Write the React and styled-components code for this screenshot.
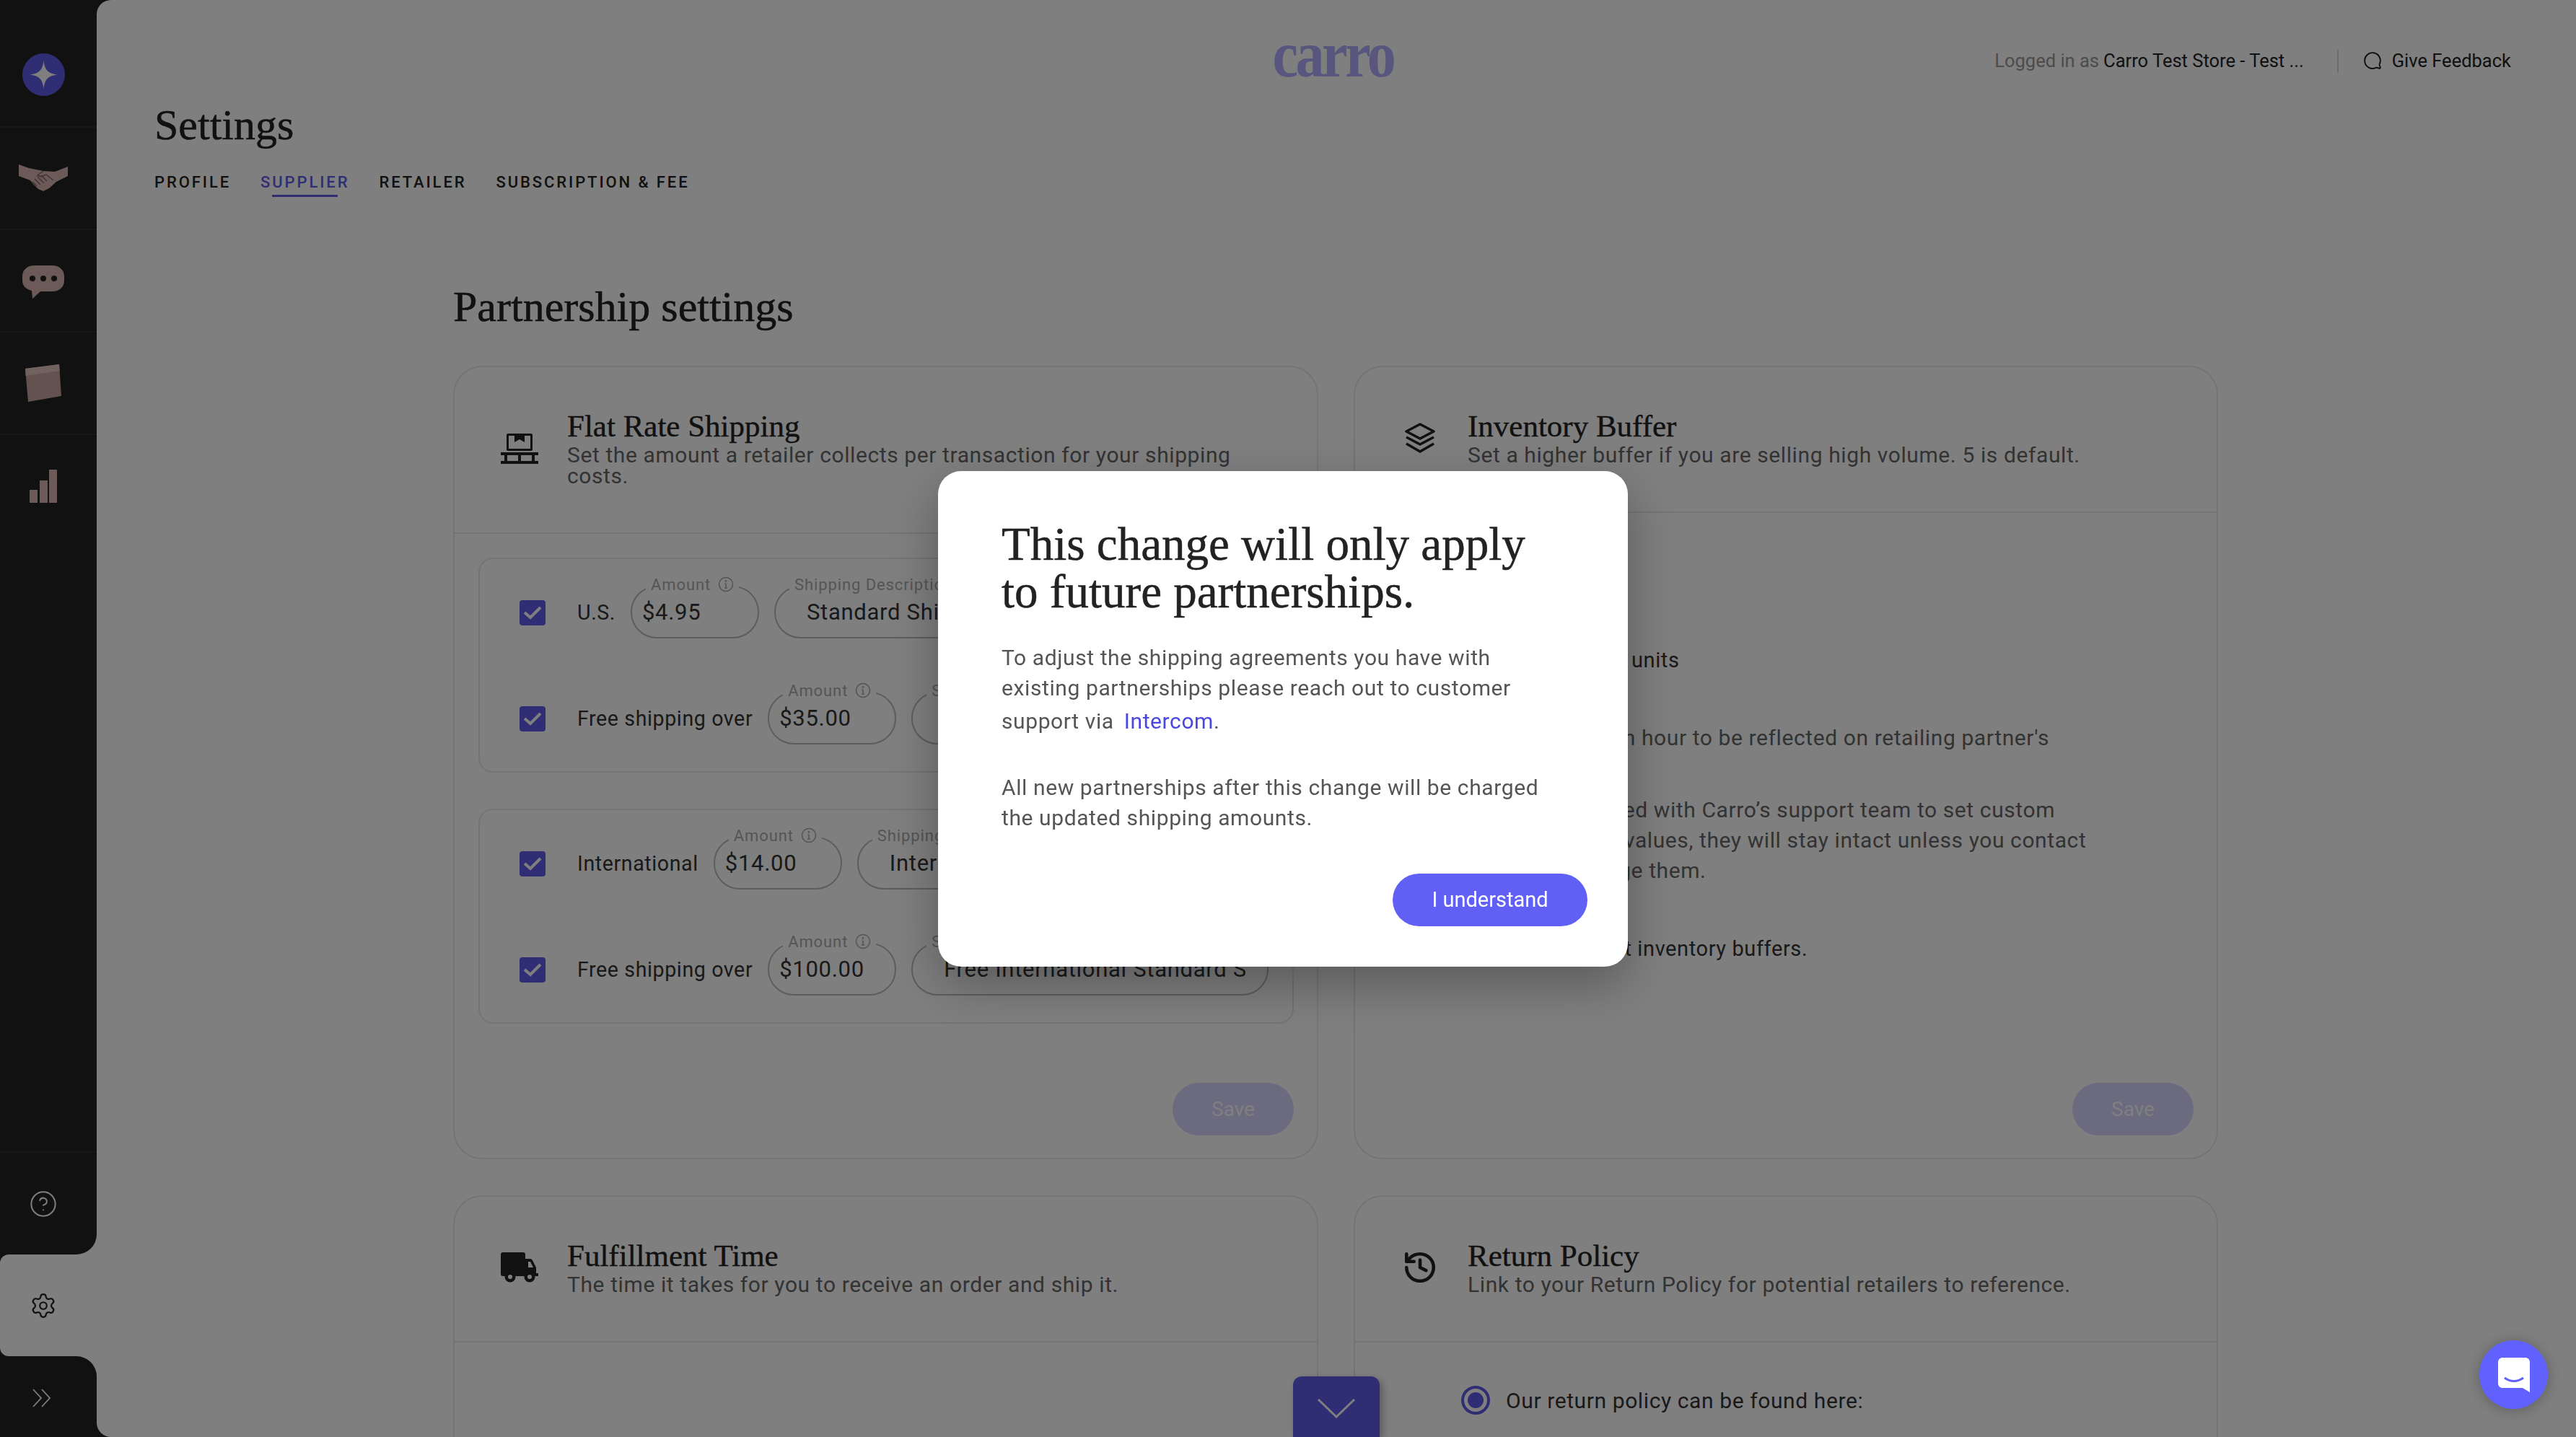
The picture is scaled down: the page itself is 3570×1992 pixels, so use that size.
import React from 'react'
import styled, { createGlobalStyle } from 'styled-components'
import { CircleHelp, Settings as SettingsIcon, MessageCircle, History } from 'lucide-react'

const sans = `Roboto, 'Liberation Sans', sans-serif`
const serif = `'Liberation Serif', serif`
const purple = '#5f5ce8'

const Global = createGlobalStyle`
  html, body { margin: 0; padding: 0; height: 100%; background: #222; }
  * { box-sizing: border-box; }
  body { font-family: ${sans}; overflow: hidden; }
`

const App_ = styled.div`
  display: flex;
  height: 1992px;
  overflow: hidden;
  background: #222;
`

const Side = styled.nav`
  width: 134px;
  flex: none;
  display: flex;
  flex-direction: column;
  background: #fff;
`

const Rail = styled.div`
  flex: 1;
  display: flex;
  flex-direction: column;
  background: #222;
  border-bottom-right-radius: 28px;
`

const RailItem = styled.div`
  height: ${p => p.$h || 142}px;
  display: flex;
  align-items: center;
  justify-content: center;
  padding: ${p => p.$top || 0}px 14px 0 0;
  ${p => (p.$border === 'top' ? 'border-top: 2px solid #2e2e2e;' : '')}
  ${p => (p.$border === 'none' || p.$border === 'top' ? '' : 'border-bottom: 2px solid #2e2e2e;')}
`

const Spacer = styled.div`
  flex: 1;
`

const GearCell = styled.div`
  height: 141px;
  background: #222;
`

const GearTab = styled.div`
  height: 100%;
  background: #fff;
  border-radius: 12px 0 0 12px;
  display: flex;
  align-items: center;
  justify-content: center;
  padding-right: 14px;
  color: #222;
`

const Collapse = styled.div`
  height: 112px;
  background: #222;
  border-top-right-radius: 28px;
  display: flex;
  align-items: center;
  justify-content: center;
  padding: 4px 18px 0 0;
`

const Main = styled.main`
  flex: 1;
  min-width: 0;
  background: #fff;
  border-radius: 20px 0 0 20px;
  padding: 0 90px 0 80px;
  overflow: hidden;
`

const TopBar = styled.header`
  height: 143px;
  display: grid;
  grid-template-columns: 1fr auto 1fr;
  align-items: start;
`

const Logo = styled.div`
  grid-column: 2;
  font-family: ${serif};
  font-weight: 700;
  font-size: 92px;
  line-height: 150px;
  height: 143px;
  letter-spacing: -4px;
  color: #b0adff;
  transform: scaleX(0.87);
`

const UserBar = styled.div`
  grid-column: 3;
  display: flex;
  align-items: center;
  justify-content: flex-end;
  height: 168px;
  font-size: 25.5px;
  color: #222;
`

const Muted = styled.span`
  color: #999;
  margin-right: 6px;
`

const Sep = styled.span`
  width: 2px;
  height: 33px;
  background: #ddd;
  margin: 0 34px 0 46px;
`

const PageTitle = styled.h1`
  margin: 0;
  font-family: ${serif};
  font-weight: 400;
  font-size: 60px;
  line-height: 60px;
  -webkit-text-stroke: 0.5px #222;
  color: #222;
`

const Tabs = styled.div`
  display: flex;
  gap: 41px;
  margin: 35px 0 121px;
  height: 36px;
`

const Tab = styled.div`
  font-size: 22px;
  font-weight: 500;
  line-height: 30px;
  letter-spacing: 2.9px;
  color: ${p => (p.$active ? purple : '#222')};
  &::after {
    content: '';
    display: ${p => (p.$active ? 'block' : 'none')};
    height: 3px;
    margin: 2px 16px 0;
    background: ${purple};
  }
`

const Section = styled.section`
  margin-left: 414px;
  width: 2446px;
`

const SectionTitle = styled.h2`
  margin: 0 0 52px;
  font-family: ${serif};
  font-weight: 400;
  font-size: 60px;
  line-height: 60px;
  -webkit-text-stroke: 0.5px #222;
  color: #222;
`

const Grid = styled.div`
  display: grid;
  grid-template-columns: 1199px 1198px;
  gap: 50px 49px;
`

const Card = styled.article`
  height: 1100px;
  display: flex;
  flex-direction: column;
  border: 2px solid #e8e8e8;
  border-radius: 40px;
`

const CardHeader = styled.div`
  display: flex;
  align-items: center;
  gap: 37px;
  padding: 60px 40px 64px 61px;
  border-bottom: 2px solid #e8e8e8;
`

const IconCell = styled.div`
  width: 58px;
  flex: none;
  display: flex;
  justify-content: center;
  color: #222;
`

const CardTitle = styled.h3`
  margin: 0 0 3px;
  font-family: ${serif};
  font-weight: 400;
  font-size: 43px;
  line-height: 44px;
  -webkit-text-stroke: 0.4px #222;
  color: #222;
`

const CardDesc = styled.p`
  margin: 0;
  font-size: 30px;
  line-height: 29px;
  letter-spacing: 0.6px;
  color: #666;
`

const CardBody = styled.div`
  flex: 1;
  display: flex;
  flex-direction: column;
  padding: 33px 32px 31px 33px;
`

const Group = styled.div`
  display: flex;
  flex-direction: column;
  gap: 75px;
  padding: 38px 33px 37px 55px;
  margin-bottom: 50px;
  border: 2px solid #e8e8e8;
  border-radius: 20px;
`

const Row = styled.div`
  height: 72px;
  display: flex;
  align-items: center;
  gap: 21px;
`

const Check = styled.span`
  width: 36px;
  height: 35px;
  flex: none;
  margin-right: 23px;
  border-radius: 4px;
  background: ${purple};
  display: flex;
  align-items: center;
  justify-content: center;
`

const RowLabel = styled.span`
  font-size: 28.6px;
  letter-spacing: 0.6px;
  color: #333;
  white-space: nowrap;
`

const ReturnLabel = styled(RowLabel)`
  font-size: 30px;
`

const Field = styled.fieldset`
  height: 84px;
  margin: -12px 0 0;
  padding: 0;
  min-width: 0;
  border: 2px solid #bbb;
  border-radius: 36px;
  flex: ${p => (p.$grow ? '1' : 'none')};
  width: ${p => (p.$grow ? 'auto' : '178px')};
`

const Legend = styled.legend`
  margin-left: ${p => p.$left}px;
  padding: 0 7px;
  height: 24px;
  display: flex;
  align-items: center;
  gap: 10px;
  font-size: 22px;
  letter-spacing: 0.9px;
  color: #aaa;
  white-space: nowrap;
  transform: translateY(-3px);
`

const Value = styled.div`
  margin: 0 ${p => p.$right}px 0 ${p => p.$inset}px;
  font-size: 31px;
  line-height: 48px;
  letter-spacing: 0.7px;
  color: #333;
  overflow: hidden;
  white-space: nowrap;
`

const SaveButton = styled.button`
  align-self: flex-end;
  margin-top: auto;
  width: 168px;
  height: 73px;
  border: 0;
  border-radius: 37px;
  background: #d6d4ff;
  color: #fff;
  font-family: ${sans};
  font-size: 28px;
`

const BufferBody = styled.div`
  flex: 1;
  display: flex;
  flex-direction: column;
  padding: 183px 32px 31px 146px;
`

const BufferRow = styled.div`
  display: flex;
  align-items: center;
  gap: 22px;
  height: 42px;
  margin-bottom: 66px;
  font-size: 29px;
  letter-spacing: 0.6px;
  color: #333;
`

const BufferInput = styled.div`
  width: 215px;
  height: 72px;
  border: 2px solid #bbb;
  border-radius: 36px;
`

const Note = styled.p`
  margin: 0 0 ${p => p.$after || 16}px;
  font-size: ${p => (p.$dark ? 29 : 30)}px;
  line-height: 42px;
  letter-spacing: 0.6px;
  white-space: nowrap;
  color: ${p => (p.$dark ? '#333' : '#666')};
`

const ReturnBody = styled.div`
  display: flex;
  align-items: center;
  gap: 22px;
  padding: 60px 0 0 147px;
`

const Radio = styled.span`
  width: 40px;
  height: 40px;
  border-radius: 50%;
  border: 4px solid ${purple};
  display: flex;
  align-items: center;
  justify-content: center;
  &::after {
    content: '';
    width: 22px;
    height: 22px;
    border-radius: 50%;
    background: ${purple};
  }
`

const ScrollDown = styled.button`
  position: fixed;
  left: 1792px;
  bottom: 0;
  width: 120px;
  height: 84px;
  border: 0;
  border-radius: 12px 12px 0 0;
  background: ${purple};
  box-shadow: 4px 4px 12px rgba(0, 0, 0, 0.3);
  display: flex;
  justify-content: center;
  padding: 30px 0 0;
`

const Overlay = styled.div`
  position: fixed;
  inset: 0;
  padding-right: 14px;
  background: rgba(0, 0, 0, 0.5);
  display: flex;
  align-items: center;
  justify-content: center;
`

const Modal = styled.div`
  width: 956px;
  height: 687px;
  padding: 68px 56px 56px 88px;
  background: #fff;
  border-radius: 32px;
  box-shadow: 0 24px 70px rgba(0, 0, 0, 0.3);
  display: flex;
  flex-direction: column;
`

const ModalTitle = styled.h2`
  margin: 0 0 38px;
  font-family: ${serif};
  font-weight: 400;
  font-size: 65px;
  line-height: 66px;
  -webkit-text-stroke: 0.5px #222;
  color: #222;
`

const ModalText = styled.p`
  margin: 0 0 ${p => p.$after || 0}px;
  font-size: 30px;
  line-height: 42px;
  letter-spacing: 0.6px;
  color: #555;
`

const Intercom = styled.span`
  color: #4a46e0;
  margin-left: 6px;
  line-height: 50px;
`

const Understand = styled.button`
  align-self: flex-end;
  margin-top: auto;
  width: 270px;
  height: 73px;
  border: 0;
  border-radius: 37px;
  background: #6160f5;
  color: #fff;
  font-family: ${sans};
  font-size: 29px;
`

const Launcher = styled.div`
  position: fixed;
  left: 3436px;
  top: 1858px;
  width: 95px;
  height: 95px;
  border-radius: 50%;
  background: #6161ff;
  box-shadow: 0 2px 20px rgba(0, 0, 0, 0.25);
  display: flex;
  align-items: center;
  justify-content: center;
`

const FeedbackIcon = styled(MessageCircle)`
  margin-right: 14px;
  transform: scaleX(-1);
`

const Tick = () => (
  <svg width="28" height="22" viewBox="0 0 28 22" fill="none" stroke="#fff" strokeWidth="4">
    <path d="M3 11l8 7L25 4" />
  </svg>
)

const Info = () => (
  <svg width="22" height="22" viewBox="0 0 22 22" fill="none" stroke="#aaa" strokeWidth="1.6">
    <circle cx="11" cy="11" r="9.5" />
    <path d="M11 10v6M9 16h4M9.5 10H11" />
    <circle cx="11" cy="6.5" r="0.6" />
  </svg>
)

const PalletIcon = () => (
  <svg width="52" height="42" viewBox="0 0 52 42" fill="currentColor">
    <path fillRule="evenodd" d="M10 0h32a2 2 0 012 2v20a2 2 0 01-2 2H10a2 2 0 01-2-2V2a2 2 0 012-2zm1 3v18h30V3h-8v9l-7-4-7 4V3z" />
    <rect x="0" y="26" width="52" height="4" />
    <rect x="0" y="38" width="52" height="4" />
    <rect x="5" y="30" width="4" height="8" />
    <rect x="24" y="30" width="4" height="8" />
    <rect x="43" y="30" width="4" height="8" />
  </svg>
)

const LayersIcon = () => (
  <svg width="44" height="43" viewBox="0 0 44 43" fill="none" stroke="currentColor" strokeWidth="3.6" strokeLinejoin="round">
    <path d="M22 2L41 12 22 22 3 12z" />
    <path d="M3 20l19 10 19-10" />
    <path d="M3 29l19 11 19-11" />
  </svg>
)

const TruckIcon = () => (
  <svg width="52" height="42" viewBox="0 0 52 42" fill="currentColor">
    <path d="M3 0h28a3 3 0 013 3v30H3a3 3 0 01-3-3V3a3 3 0 013-3z" />
    <path fillRule="evenodd" d="M34 9h7a3 3 0 012.6 1.5L49 21v8h3v4H34zm4 4v8h7l-4-8z" />
    <circle cx="13" cy="34" r="7.5" fill="#222" />
    <circle cx="13" cy="34" r="3" fill="#fff" />
    <circle cx="40" cy="34" r="7.5" fill="#222" />
    <circle cx="40" cy="34" r="3" fill="#fff" />
  </svg>
)

const RateRow = ({ label, amount, desc }) => (
  <Row>
    <Check><Tick /></Check>
    <RowLabel>{label}</RowLabel>
    <Field>
      <Legend $left={19}>Amount <Info /></Legend>
      <Value $inset={14} $right={10}>{amount}</Value>
    </Field>
    <Field $grow>
      <Legend $left={19}>Shipping Description</Legend>
      <Value $inset={43} $right={30}>{desc}</Value>
    </Field>
  </Row>
)

export default function App() {
  return (
    <App_>
      <Global />
      <Side>
        <Rail>
          <RailItem $h={177}>
            <svg width="59" height="59" viewBox="0 0 59 59" style={{ marginTop: 32 }}>
              <circle cx="29.5" cy="29.5" r="29.5" fill={purple} />
              <path d="M29.5 10c1.500 13 6 18 19.500 19.500C35.500 31 31 36 29.500 49 28 36 23.500 31 10 29.500 23.500 28 28 23 29.500 10z" fill="#fff" />
            </svg>
          </RailItem>
          <RailItem>
            <svg width="68" height="38" viewBox="0 0 68 38" fill="#d6b5b0">
              <path d="M0 0l14 5 20 4 16 1 18-7v13L52 24 42 33l-8 4-7-3-7-7-4-5-16-6z" />
              <path d="M22 20l8 8M26 17l9 9M31 15l8 8M19 24l6 6" stroke="#7d6562" strokeWidth="1.400" fill="none" />
              <path d="M34 9l-8 6 5 2 7-3 10 8" stroke="#7d6562" strokeWidth="1.400" fill="none" />
            </svg>
          </RailItem>
          <RailItem $top={3}>
            <svg width="58" height="46" viewBox="0 0 58 46" fill="#d6b5b0">
              <path d="M17 0h24c10 0 17 6 17 15v6c0 9-7 15-17 15H25L14 46l-1-11C5 33 0 28 0 21v-6C0 6 7 0 17 0z" />
              <circle cx="14" cy="18" r="4" fill="#222" />
              <circle cx="29" cy="18" r="4" fill="#222" />
              <circle cx="44" cy="18" r="4" fill="#222" />
            </svg>
          </RailItem>
          <RailItem>
            <svg width="50" height="52" viewBox="0 0 50 52" fill="#c9a5a0">
              <path d="M0 6L47 0l3 44-46 8z" />
              <path d="M0 6L47 0l.7 9L.6 16z" fill="#e2c5c0" />
            </svg>
          </RailItem>
          <RailItem $border="none">
            <svg width="38" height="46" viewBox="0 0 38 46" fill="#d6b5b0">
              <rect x="0" y="28" width="11" height="18" />
              <rect x="14" y="15" width="11" height="31" />
              <rect x="27" y="0" width="11" height="46" />
            </svg>
          </RailItem>
          <Spacer />
          <RailItem $border="top" $h={143}>
            <CircleHelp size={40} strokeWidth={1.200} color="#fff" />
          </RailItem>
        </Rail>
        <GearCell>
          <GearTab>
            <SettingsIcon size={38} strokeWidth={1.400} />
          </GearTab>
        </GearCell>
        <Collapse>
          <svg width="28" height="26" viewBox="0 0 28 26" fill="none" stroke="#fff" strokeWidth="1.800">
            <path d="M2 1l11 12L2 25M14 1l11 12-11 12" />
          </svg>
        </Collapse>
      </Side>

      <Main>
        <TopBar>
          <Logo>carro</Logo>
          <UserBar>
            <Muted>Logged in as</Muted>
            Carro Test Store - Test ...
            <Sep />
            <FeedbackIcon size={26} strokeWidth={1.800} />
            Give Feedback
          </UserBar>
        </TopBar>
        <PageTitle>Settings</PageTitle>
        <Tabs>
          <Tab>PROFILE</Tab>
          <Tab $active>SUPPLIER</Tab>
          <Tab>RETAILER</Tab>
          <Tab>SUBSCRIPTION &amp; FEE</Tab>
        </Tabs>

        <Section>
          <SectionTitle>Partnership settings</SectionTitle>
          <Grid>
            <Card>
              <CardHeader>
                <IconCell><PalletIcon /></IconCell>
                <div>
                  <CardTitle>Flat Rate Shipping</CardTitle>
                  <CardDesc>Set the amount a retailer collects per transaction for your shipping<br />costs.</CardDesc>
                </div>
              </CardHeader>
              <CardBody>
                <Group>
                  <RateRow label="U.S." amount="$4.95" desc="Standard Shipping" />
                  <RateRow label="Free shipping over" amount="$35.00" desc="Free Standard Shipping" />
                </Group>
                <Group>
                  <RateRow label="International" amount="$14.00" desc="International Shipping" />
                  <RateRow label="Free shipping over" amount="$100.00" desc="Free International Standard Shipping" />
                </Group>
                <SaveButton>Save</SaveButton>
              </CardBody>
            </Card>

            <Card>
              <CardHeader>
                <IconCell><LayersIcon /></IconCell>
                <div>
                  <CardTitle>Inventory Buffer</CardTitle>
                  <CardDesc>Set a higher buffer if you are selling high volume. 5 is default.</CardDesc>
                </div>
              </CardHeader>
              <BufferBody>
                <BufferRow><BufferInput />units</BufferRow>
                <Note $after={58}>Revisions take an hour to be reflected on retailing partner's</Note>
                <Note $after={66}>
                  If you have worked with Carro’s support team to set custom<br />
                  inventory buffer values, they will stay intact unless you contact<br />
                  support to change them.
                </Note>
                <Note $dark>Learn more about inventory buffers.</Note>
                <SaveButton>Save</SaveButton>
              </BufferBody>
            </Card>

            <Card>
              <CardHeader>
                <IconCell><TruckIcon /></IconCell>
                <div>
                  <CardTitle>Fulfillment Time</CardTitle>
                  <CardDesc>The time it takes for you to receive an order and ship it.</CardDesc>
                </div>
              </CardHeader>
            </Card>

            <Card>
              <CardHeader>
                <IconCell><History size={50} strokeWidth={2.200} /></IconCell>
                <div>
                  <CardTitle>Return Policy</CardTitle>
                  <CardDesc>Link to your Return Policy for potential retailers to reference.</CardDesc>
                </div>
              </CardHeader>
              <ReturnBody>
                <Radio />
                <ReturnLabel>Our return policy can be found here:</ReturnLabel>
              </ReturnBody>
            </Card>
          </Grid>
        </Section>
      </Main>

      <ScrollDown>
        <svg width="54" height="28" viewBox="0 0 54 28" fill="none" stroke="#fff" strokeWidth="3">
          <path d="M2 2l25 24L52 2" />
        </svg>
      </ScrollDown>

      <Overlay>
        <Modal>
          <ModalTitle>This change will only apply<br />to future partnerships.</ModalTitle>
          <ModalText $after={46}>
            To adjust the shipping agreements you have with<br />
            existing partnerships please reach out to customer<br />
            support via <Intercom>Intercom</Intercom>.
          </ModalText>
          <ModalText>
            All new partnerships after this change will be charged<br />
            the updated shipping amounts.
          </ModalText>
          <Understand>I understand</Understand>
        </Modal>
      </Overlay>

      <Launcher>
        <svg width="44" height="48" viewBox="0 0 44 48" fill="#fff">
          <path d="M6 0h32a6 6 0 016 6v42l-10-6H6a6 6 0 01-6-6V6a6 6 0 016-6z" />
          <path d="M9 28c8 6 18 6 26 0" stroke="#6161ff" strokeWidth="3" fill="none" />
        </svg>
      </Launcher>
    </App_>
  )
}
